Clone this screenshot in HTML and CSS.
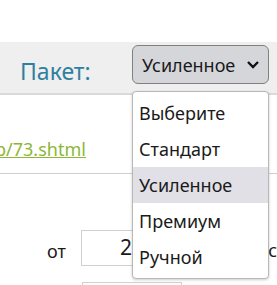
FILE: index.html
```html
<!DOCTYPE html>
<html lang="ru">
<head>
    <meta charset="UTF-8">
    <title>Пакет</title>
    <link rel="stylesheet" href="styles.css">
</head>
<body>
    <div class="top"></div>

    <div class="bar">
        <span class="label">Пакет:</span>
        <div class="select">
            <span>Усиленное</span>
            <svg width="14" height="10" viewBox="0 0 14 10"><path d="M2 2 L7 7 L12 2" fill="none" stroke="#111" stroke-width="2.4"/></svg>
        </div>
    </div>

    <div class="link-row">
        <a href="#">p/73.shtml</a>
    </div>

    <div class="form">
        <div class="row">
            <span class="from">от</span>
            <span class="field">2</span>
            <span class="tail">с</span>
        </div>
        <div class="row">
            <span class="from"></span>
            <span class="field"></span>
        </div>
    </div>

    <ul class="menu">
        <li>Выберите</li>
        <li>Стандарт</li>
        <li class="active">Усиленное</li>
        <li>Премиум</li>
        <li>Ручной</li>
    </ul>
</body>
</html>
```

FILE: styles.css
```css
html{
    overflow: hidden;
}

body{
    margin: 0;
    width: 277px;
    height: 285px;
    overflow: hidden;
    position: relative;
    font-family: "Noto Sans", sans-serif;
    font-size: 18px;
    color: #1a1a1a;
    background: #fff;
}

.top{
    height: 42px;
}

.bar{
    display: flex;
    align-items: center;
    height: 51px;
    background: #efefef;
    border-bottom: 2px solid #dadada;
    padding-left: 20px;
}

.label{
    width: 112px;
    font-size: 23px;
    color: #2f7fa0;
    margin-top: 6px;
}

.select{
    display: flex;
    align-items: center;
    justify-content: space-between;
    box-sizing: border-box;
    width: 137px;
    height: 39px;
    margin-top: -6px;
    padding: 0 8px 0 9px;
    background: #d5d6da;
    border: 1px solid #808080;
    border-radius: 6px;
}

.link-row{
    box-sizing: border-box;
    height: 79px;
    padding-top: 42px;
    border-bottom: 1px solid #cfcfcf;
}

.link-row a{
    display: inline-block;
    margin-left: -5px;
    font-size: 18px;
    line-height: 24px;
    color: #8cb735;
}

.form{
    padding-top: 56px;
}

.row{
    display: flex;
    align-items: center;
    height: 36px;
    margin-bottom: 16px;
}

.from{
    width: 82px;
    padding: 6px 0 0 47px;
    box-sizing: border-box;
}

.field{
    box-sizing: border-box;
    width: 100px;
    height: 36px;
    border: 1px solid #d0d0d0;
    padding: 2px 0 0 38px;
    font-size: 21px;
}

.tail{
    margin-left: 89px;
    padding-top: 4px;
}

.menu{
    position: absolute;
    left: 132px;
    top: 91px;
    width: 137px;
    height: 188px;
    box-sizing: border-box;
    margin: 0;
    padding: 3px 0;
    list-style: none;
    background: #fff;
    border: 1px solid #b8b8b8;
    border-radius: 4px;
    box-shadow: 0 1px 3px rgba(0, 0, 0, 0.2);
}

.menu li{
    height: 36px;
    line-height: 36px;
    padding-left: 6px;
}

.menu li.active{
    background: #e0e0e6;
}
```
